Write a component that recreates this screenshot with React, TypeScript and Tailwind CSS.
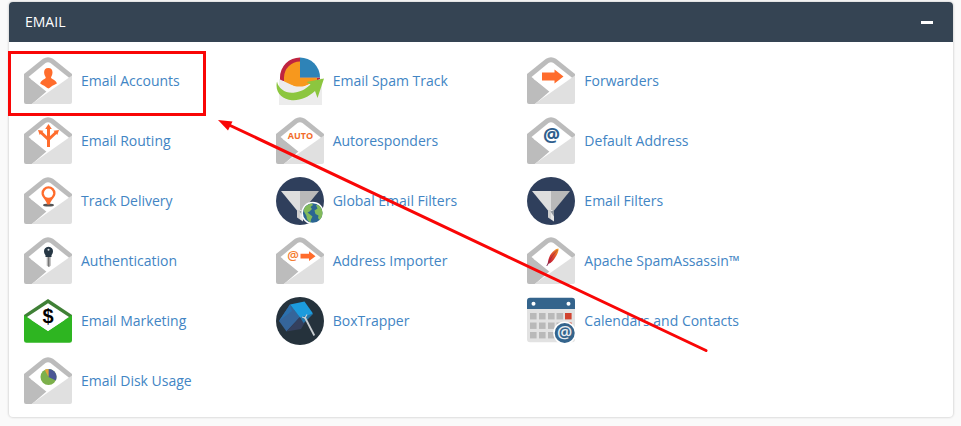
import React from "react";

interface EnvelopeProps {
  children?: React.ReactNode;
}

function Envelope({ children }: EnvelopeProps) {
  return (
    <svg viewBox="0 0 48 48" className="h-12 w-12 shrink-0" aria-hidden="true">
      <path d="M0 17 L19 1.8 Q24 -1.4 29 1.8 L48 17 V22 H0 Z" fill="#bcbcbc" />
      <path d="M0 17 L23 34 L8 47 H2 Q0 47 0 45 Z" fill="#bcbcbc" />
      <path d="M4.5 20 L21.5 6 Q24 4.4 26.5 6 L46 21.5 L24 36 Z" fill="#fff" />
      <path d="M48 18.5 V45 Q48 47 46 47 H7.5 Z" fill="#e0e0e0" />
      {children}
    </svg>
  );
}

function AccountsIcon() {
  return (
    <Envelope>
      <path
        d="M24.3 11 C27.3 11 28.6 12.8 28.5 15.5 C28.4 18 27.4 19 27 20.8 C27.5 22.6 32 22.6 32.9 26.5 L30 28 C27.5 28.5 26.5 31 24.4 31.5 C22.3 31 21 28.5 18.5 28 L16.2 26.5 C17 22.6 21.3 22.6 21.8 20.8 C21.3 19 20.2 18 20.1 15.5 C20 12.8 21.3 11 24.3 11 Z"
        fill="#ff6c2c"
      />
    </Envelope>
  );
}

function SpamTrackIcon() {
  return (
    <svg viewBox="0 0 48 48" className="h-12 w-12 shrink-0" aria-hidden="true">
      <path d="M24 0.5 A20 20 0 0 0 4 20.5 V24 H44 V20.5 H24 Z" fill="#bf2440" />
      <path d="M24 4.5 A16 16 0 0 0 8 20.5 V26 L24 31 L41 24 V20.5 H24 Z" fill="#f7981d" />
      <path d="M24 0.5 A20 20 0 0 1 44 20.5 H24 Z" fill="#2e83b7" />
      <path d="M3 22 L19 29.5 H29 L46 21 V48 H3 Z" fill="#ececec" />
      <path
        d="M1 24.5 C2.5 32 10 37 19 35.5 C26 34.5 31 31 34.5 27.5 L30.5 25 L48 21.5 L41.5 41 L39 34 C32.5 40 24 43.8 16 43.2 C6 42.5 -1.5 35 1 24.5 Z"
        fill="#8cc63f"
      />
    </svg>
  );
}

function ForwardersIcon() {
  return (
    <Envelope>
      <path d="M15 15.5 H27.5 V12.5 L36.5 19.5 L27.5 26.5 V23.5 H15 Z" fill="#ff6c2c" />
    </Envelope>
  );
}

function RoutingIcon() {
  return (
    <Envelope>
      <g fill="none" stroke="#ff6c2c" strokeWidth="3">
        <path d="M24.5 30 V11" />
        <path d="M17 15.5 L24.5 22.5 L32 15.5" />
      </g>
      <g fill="#ff6c2c">
        <path d="M24.5 7 L27.8 12 H21.2 Z" />
        <path d="M14 13 L19.5 13.7 L15.7 18 Z" />
        <path d="M35 13 L29.5 13.7 L33.3 18 Z" />
      </g>
    </Envelope>
  );
}

function AutoIcon() {
  return (
    <Envelope>
      <text
        x="24.5"
        y="22"
        textAnchor="middle"
        fill="#f26c2a"
        className="font-['Open_Sans',sans-serif] text-[9px] font-bold"
      >
        AUTO
      </text>
    </Envelope>
  );
}

function AddressIcon() {
  return (
    <Envelope>
      <text
        x="24.5"
        y="25"
        textAnchor="middle"
        fill="#2f5f8e"
        className="font-['Open_Sans',sans-serif] text-[19px] font-bold"
      >
        @
      </text>
    </Envelope>
  );
}

function TrackDeliveryIcon() {
  return (
    <Envelope>
      <ellipse cx="24.5" cy="28" rx="5.5" ry="1.6" fill="#555" />
      <path
        d="M24.5 9.3 A7 7 0 0 1 31.5 16.3 C31.5 20.5 27 22.5 25.7 27.5 H23.3 C22 22.5 17.5 20.5 17.5 16.3 A7 7 0 0 1 24.5 9.3 Z"
        fill="#ff6c2c"
      />
      <circle cx="24.5" cy="16.2" r="4.6" fill="#fff" />
    </Envelope>
  );
}

function Funnel() {
  return (
    <>
      <circle cx="24" cy="24" r="24" fill="#2f3f5c" />
      <path d="M5 14 H24 V33.5 H21 Z" fill="#dedede" />
      <path d="M24 14 H43 L27 33.5 H24 Z" fill="#b9b9b9" />
      <path d="M21 33 H24 V42.5 L21 40.5 Z" fill="#cfcfcf" />
      <path d="M24 33 H27 V44.5 L24 42.5 Z" fill="#e6e6e6" />
      <path d="M23.5 34.5 L27 33 V39.5 Z" fill="#8f959d" />
    </>
  );
}

function FilterIcon() {
  return (
    <svg viewBox="0 0 48 48" className="h-12 w-12 shrink-0" aria-hidden="true">
      <Funnel />
    </svg>
  );
}

function GlobalFilterIcon() {
  return (
    <svg viewBox="0 0 48 48" className="h-12 w-12 shrink-0" aria-hidden="true">
      <Funnel />
      <circle cx="36.7" cy="36" r="11.3" fill="#fff" />
      <circle cx="36.7" cy="36" r="9.8" fill="#2b6592" />
      <path
        d="M29 30 C31 27.5 34 26.5 36 26.4 L37 28 L34.5 30 L36 32 L33.5 34.5 L31.5 35.5 L34 37.5 L36.5 39.5 L35 42.5 L34.5 45.4 C32 44.5 30.5 42 30.5 39 L28.5 35.5 C27 34 28 31.5 29 30 Z"
        fill="#82ba5b"
      />
      <path
        d="M40 28 L42.5 28.2 C45 30 46.5 33 46.5 36 C46.5 39 45.2 41.5 43.5 43 L42 41 L42.5 38.5 L39.5 37 L38.5 33.5 L41.5 31.5 Z"
        fill="#82ba5b"
      />
    </svg>
  );
}

function KeyIcon() {
  return (
    <Envelope>
      <path d="M22.7 19 H26.8 V28.5 L25 30.3 L22.7 28.5 Z" fill="#b5b5b5" />
      <path d="M24 19 H25.3 V29.5 H24 Z" fill="#777" />
      <path
        d="M24.5 9.8 C27.5 9.8 29 12 29 14.3 C29 16.2 28 17.6 27.5 18.2 V20 H21.5 V18.2 C21 17.6 20 16.2 20 14.3 C20 12 21.5 9.8 24.5 9.8 Z"
        fill="#263744"
      />
      <circle cx="24.5" cy="12.7" r="1" fill="#dfe4e8" />
    </Envelope>
  );
}

function ImporterIcon() {
  return (
    <Envelope>
      <text
        x="17"
        y="23"
        textAnchor="middle"
        fill="#f47c30"
        className="font-['Open_Sans',sans-serif] text-[13px] font-semibold"
      >
        @
      </text>
      <path d="M24.5 16.7 H33 V14.2 L39.5 19.2 L33 24.1 V21.6 H24.5 Z" fill="#ff6c2c" />
    </Envelope>
  );
}

function FeatherIcon() {
  return (
    <Envelope>
      <defs>
        <linearGradient id="feather" x1="1" y1="0" x2="0" y2="1">
          <stop offset="0" stopColor="#f7a823" />
          <stop offset="0.35" stopColor="#e2552c" />
          <stop offset="0.7" stopColor="#cb2433" />
          <stop offset="1" stopColor="#6d3b66" />
        </linearGradient>
      </defs>
      <path
        d="M31.5 11.5 C29 11.5 25 15 23 18.5 C21.5 21.5 21 24 20.8 26 L19.3 29 L20.2 29 L21.6 26.8 C24 26 26.5 23.5 28.5 20 C30.5 17 31.8 14 31.5 11.5 Z"
        fill="url(#feather)"
      />
      <path d="M30.5 13 C27 16.5 23.5 21 21.2 26.5" fill="none" stroke="#8f2340" strokeWidth="0.6" />
    </Envelope>
  );
}

function MarketingIcon() {
  return (
    <svg viewBox="0 0 48 48" className="h-12 w-12 shrink-0" aria-hidden="true">
      <path d="M0 18 L24 2 L48 18 V23 H0 Z" fill="#3f8036" />
      <path d="M0 18 L24 34 L48 18 V43.5 Q48 45.7 45.5 45.7 H2.5 Q0 45.7 0 43.5 Z" fill="#2eb521" />
      <path d="M3 20 L24 6.3 L45 20 L24 34 Z" fill="#fff" />
      <text
        x="24"
        y="26"
        textAnchor="middle"
        fill="#000"
        className="font-['Liberation_Sans',sans-serif] text-[20px] font-bold"
      >
        $
      </text>
    </svg>
  );
}

function BoxTrapperIcon() {
  return (
    <svg viewBox="0 0 48 48" className="h-12 w-12 shrink-0" aria-hidden="true">
      <circle cx="24" cy="24" r="24" fill="#25323c" />
      <path d="M14 7.5 L3 24 L10.5 34.5 L24 20 Z" fill="#35659a" />
      <path d="M14 7.5 L3 24 L16 14 Z" fill="#2b70ad" />
      <path d="M24 20 L10.5 34.5 L25 32 L31 22 Z" fill="#34405e" />
      <path d="M24 20 L27.5 26 L31 23 L37 17 L30 15 Z" fill="#2474a8" />
      <path d="M14 7.5 L28.5 4.5 L37 16.5 L24 20.5 Z" fill="#1c9bdd" />
      <path d="M28.7 20 L38.3 38.5" stroke="#c9cdd1" strokeWidth="1.8" />
      <path d="M26 20 L29 21 L31 17.5" fill="none" stroke="#c9cdd1" strokeWidth="1.2" />
    </svg>
  );
}

function CalendarIcon() {
  const columns = [3, 12, 21, 29.5, 38];
  const rows = [16, 25.5, 35];

  return (
    <svg viewBox="0 0 48 48" className="h-12 w-12 shrink-0" aria-hidden="true">
      <path d="M0 10 H48 V42 Q48 45.3 45 45.3 H3 Q0 45.3 0 42 Z" fill="#e2e2e2" />
      <path d="M0 12 V4 Q0 0.7 3 0.7 H45 Q48 0.7 48 4 V12 Z" fill="#34648c" />
      <circle cx="6.5" cy="6.7" r="2" fill="#fff" />
      <circle cx="41.5" cy="6.7" r="2" fill="#fff" />
      {rows.map((y, row) =>
        columns.map((x, col) => (
          <rect
            key={`${x}-${y}`}
            x={x}
            y={y}
            width="6.6"
            height="6.4"
            fill={col === 4 && row < 2 ? "#d1432f" : "#b9b9b9"}
          />
        ))
      )}
      <circle cx="37.7" cy="36" r="11.5" fill="#fff" />
      <circle cx="37.7" cy="36" r="10" fill="#34648c" />
      <text
        x="37.7"
        y="41"
        textAnchor="middle"
        fill="#e8edf2"
        className="font-['Open_Sans',sans-serif] text-[17px] font-semibold"
      >
        @
      </text>
    </svg>
  );
}

function DiskUsageIcon() {
  return (
    <Envelope>
      <circle cx="24.5" cy="20" r="8" fill="#7cb04b" />
      <path d="M24.5 20 V12 A8 8 0 0 1 31.8 23.4 Z" fill="#4b5796" />
      <path d="M24.5 20 L20.8 12.9 A8 8 0 0 1 24.5 12 Z" fill="#e5a33b" />
    </Envelope>
  );
}

const items = [
  { label: "Email Accounts", Icon: AccountsIcon },
  { label: "Email Spam Track", Icon: SpamTrackIcon },
  { label: "Forwarders", Icon: ForwardersIcon },
  { label: "Email Routing", Icon: RoutingIcon },
  { label: "Autoresponders", Icon: AutoIcon },
  { label: "Default Address", Icon: AddressIcon },
  { label: "Track Delivery", Icon: TrackDeliveryIcon },
  { label: "Global Email Filters", Icon: GlobalFilterIcon },
  { label: "Email Filters", Icon: FilterIcon },
  { label: "Authentication", Icon: KeyIcon },
  { label: "Address Importer", Icon: ImporterIcon },
  { label: "Apache SpamAssassin™", Icon: FeatherIcon },
  { label: "Email Marketing", Icon: MarketingIcon },
  { label: "BoxTrapper", Icon: BoxTrapperIcon },
  { label: "Calendars and Contacts", Icon: CalendarIcon },
  { label: "Email Disk Usage", Icon: DiskUsageIcon },
];

export default function App() {
  return (
    <main className="min-h-screen bg-[#fafafa] pt-0.5 pr-2 pb-2 pl-[9px] font-['Open_Sans',sans-serif] text-sm">
      <section className="relative rounded bg-white shadow-[0_0_2px_1px_rgba(0,0,0,0.12)]">
        <header className="flex h-10 items-center justify-between rounded-t bg-[#354453] pr-5 pl-4 text-white">
          <h2>EMAIL</h2>
          <button type="button" aria-label="Collapse Email" className="flex h-5 w-3 items-center">
            <span className="h-[3px] w-full bg-white" />
          </button>
        </header>

        <ul className="grid grid-cols-[19fr_19fr_31fr] gap-y-3 px-[15px] pt-[15px] pb-3">
          {items.map(({ label, Icon }) => (
            <li key={label}>
              <a href="#" className="flex items-center gap-[9px] text-[#4285c4] hover:underline">
                <Icon />
                <span>{label}</span>
              </a>
            </li>
          ))}
        </ul>

        {/* callout box and arrow over the first item */}
        <div className="pointer-events-none absolute top-[49px] -left-px h-[65px] w-[198px] border-3 border-[#f90606]" />
        <svg
          viewBox="0 0 492 234"
          className="pointer-events-none absolute top-[117px] left-[208px] h-[234px] w-[492px]"
          aria-hidden="true"
        >
          <path d="M10 5 L489 231.5" stroke="#f90606" strokeWidth="3" strokeLinecap="round" />
          <path d="M1 1 L15.5 2.5 L11 11.5 Z" fill="#f90606" />
        </svg>
      </section>
    </main>
  );
}
